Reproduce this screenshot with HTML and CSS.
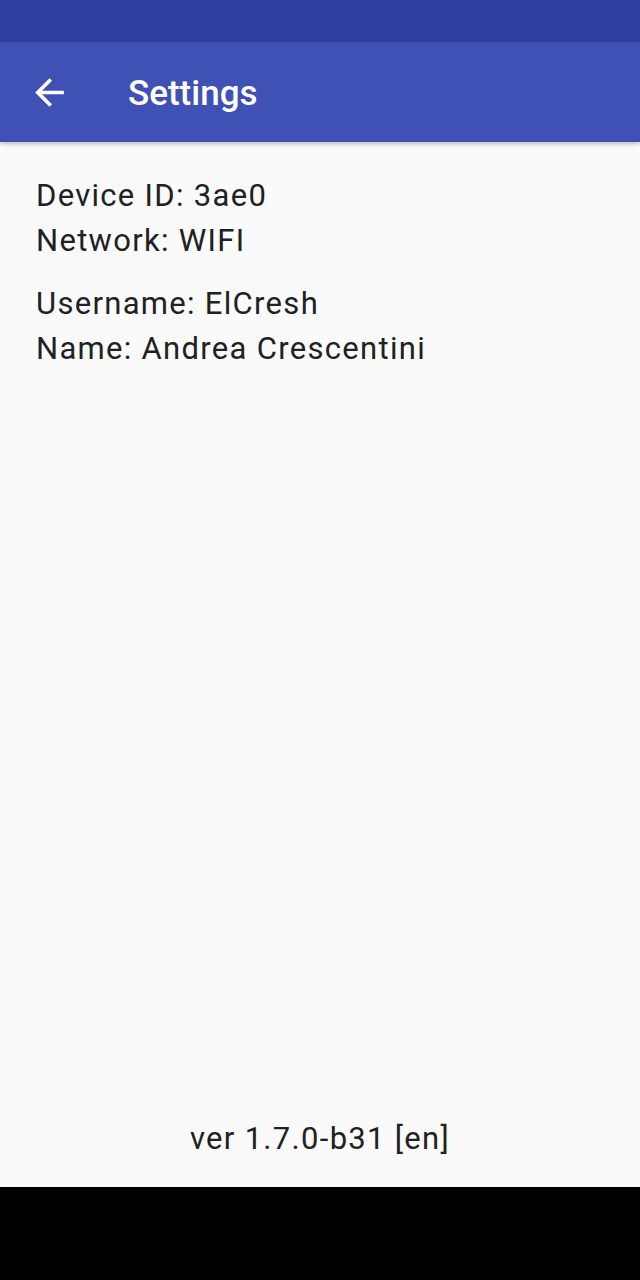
FILE: index.html
```html
<!DOCTYPE html>
<html lang="en">
<head>
<meta charset="utf-8">
<title>Settings</title>
<link rel="stylesheet" href="styles.css">
</head>
<body>
<div class="screen">
  <div class="status-bar"></div>
  <header class="toolbar">
    <button class="back" aria-label="Back">
      <svg viewBox="0 0 24 24" width="43" height="43"><path fill="#ffffff" d="M20 11H7.83l5.59-5.59L12 4l-8 8 8 8 1.41-1.41L7.83 13H20v-2z"/></svg>
    </button>
    <h1 class="title">Settings</h1>
  </header>
  <main class="content">
    <div class="group">
      <div class="line">Device ID: 3ae0</div>
      <div class="line">Network: WIFI</div>
    </div>
    <div class="group">
      <div class="line">Username: ElCresh</div>
      <div class="line">Name: Andrea Crescentini</div>
    </div>
  </main>
  <footer class="version">ver 1.7.0-b31 [en]</footer>
  <div class="nav-bar"></div>
</div>
</body>
</html>
```

FILE: styles.css
```css
html, body {
  margin: 0;
  padding: 0;
}
body {
  font-family: Roboto, "Liberation Sans", sans-serif;
  background: #000;
}
.screen {
  width: 640px;
  height: 1280px;
  display: flex;
  flex-direction: column;
  background: #fafafa;
}
.status-bar {
  height: 42px;
  background: #303f9f;
  flex: none;
}
.toolbar {
  height: 100px;
  flex: none;
  background: #3f51b5;
  display: flex;
  align-items: center;
  box-shadow: 0 2px 4px rgba(0,0,0,0.25);
  position: relative;
  z-index: 1;
}
.back {
  border: 0;
  background: transparent;
  padding: 0;
  margin-left: 28px;
  width: 43px;
  height: 43px;
  display: flex;
  align-items: center;
  justify-content: center;
}
.back svg {
  display: block;
}
.title {
  margin: 3px 0 0 57px;
  color: #ffffff;
  font-size: 35px;
  font-weight: 500;
  line-height: 40px;
}
.content {
  flex: 1;
  padding: 31px 36px 0;
  display: flex;
  flex-direction: column;
  gap: 18px;
  color: #212121;
}
.line {
  font-size: 31px;
  letter-spacing: 1.3px;
  line-height: 45px;
}
.version {
  flex: none;
  text-align: center;
  color: #212121;
  font-size: 31px;
  letter-spacing: 1.3px;
  line-height: 46px;
  padding-bottom: 25px;
}
.nav-bar {
  flex: none;
  height: 93px;
  background: #000;
}
```
